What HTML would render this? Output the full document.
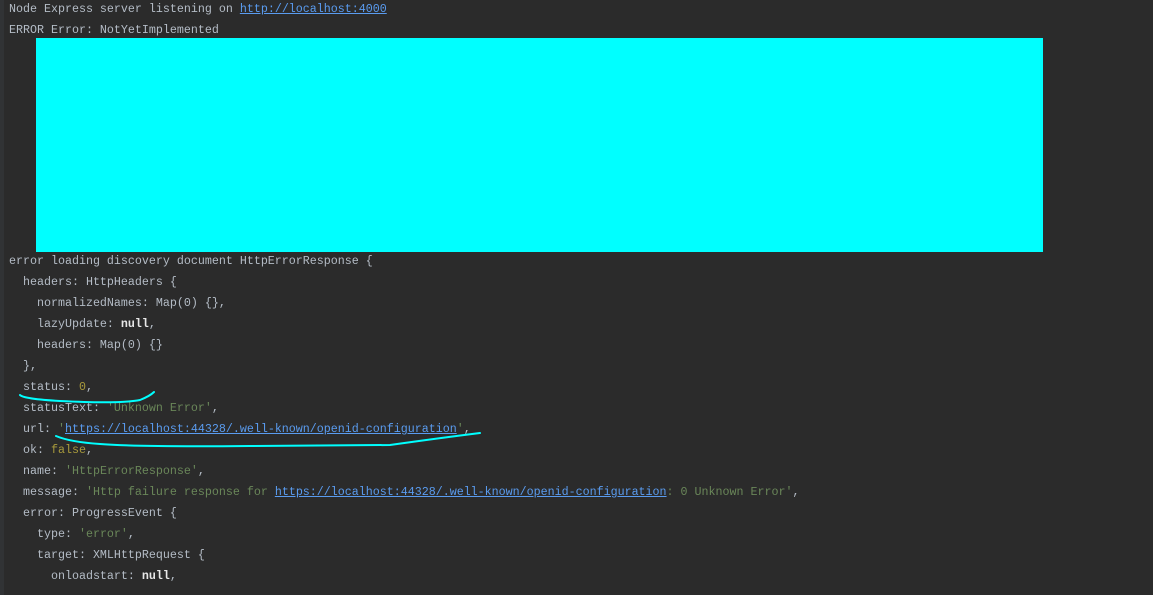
<!DOCTYPE html>
<html><head><meta charset="utf-8"><style>
html,body{margin:0;padding:0;background:#2b2b2b;width:1153px;height:595px;overflow:hidden}
.g{position:absolute;left:0;top:0;width:4px;height:595px;background:#313335}
pre{position:absolute;left:9px;top:-1px;margin:0;font-family:"Liberation Mono",monospace;font-size:11.67px;line-height:21px;color:#b4bcc6}
.s{color:#6a8759}.n{color:#a89a3c}.k{color:#e8e8e8;font-weight:bold}
.u{color:#5a9cf0;text-decoration:underline}
.box{position:absolute;left:36px;top:38px;width:1007px;height:214px;background:#00ffff}
svg{position:absolute;left:0;top:0}
</style></head><body>
<div class="g"></div>
<pre>Node Express server listening on <span class="u">http://localhost:4000</span>
ERROR Error: NotYetImplemented










error loading discovery document HttpErrorResponse {
  headers: HttpHeaders {
    normalizedNames: Map(0) {},
    lazyUpdate: <span class="k">null</span>,
    headers: Map(0) {}
  },
  status: <span class="n">0</span>,
  statusText: <span class="s">'Unknown Error'</span>,
  url: <span class="s">'<span class="u">https://localhost:44328/.well-known/openid-configuration</span>'</span>,
  ok: <span class="n">false</span>,
  name: <span class="s">'HttpErrorResponse'</span>,
  message: <span class="s">'Http failure response for <span class="u">https://localhost:44328/.well-known/openid-configuration</span>: 0 Unknown Error'</span>,
  error: ProgressEvent {
    type: <span class="s">'error'</span>,
    target: XMLHttpRequest {
      onloadstart: <span class="k">null</span>,
</pre>
<div class="box"></div>
<svg width="1153" height="595"><g fill="none" stroke="#00ffff" stroke-width="2" stroke-linecap="round">
<path d="M20 395 Q24 399 60 401 Q120 404 140 400 Q150 396 154 392"/>
<path d="M56 436 Q70 442 100 444 Q135 447 250 446 L390 445 Q440 438 480 433"/>
</g></svg>
</body></html>
